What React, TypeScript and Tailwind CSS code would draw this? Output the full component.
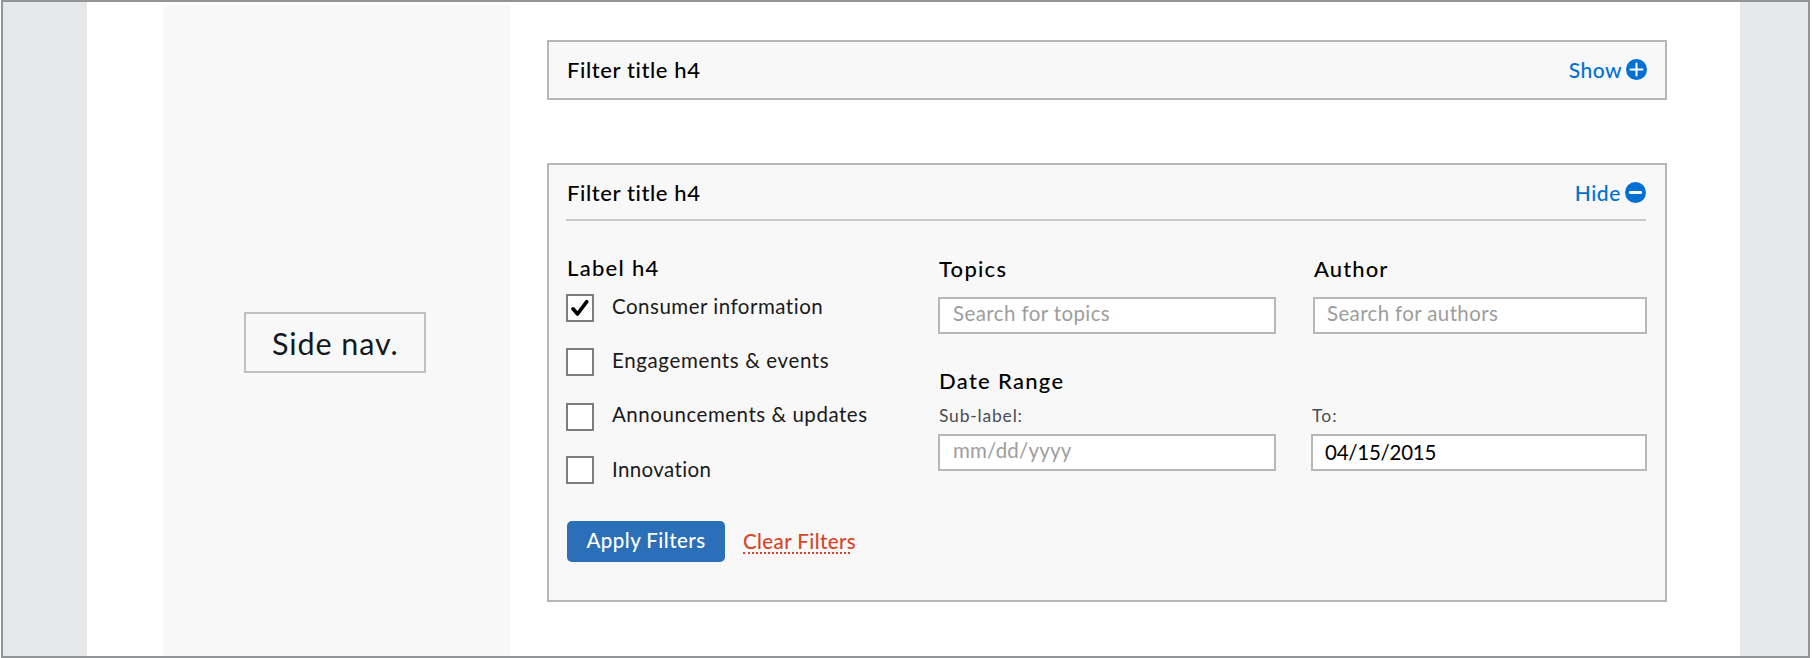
import type { ReactNode } from "react";

type Option = { label: string; checked?: boolean; row: string; text: string };

const options: Option[] = [
  { label: "Consumer information", checked: true, row: "mt-3", text: "leading-[25px] tracking-[0.5px]" },
  { label: "Engagements & events", row: "mt-[26px]", text: "leading-[25px] tracking-[0.63px]" },
  { label: "Announcements & updates", row: "mt-[27px]", text: "leading-[23px] tracking-[0.53px]" },
  { label: "Innovation", row: "mt-[25px]", text: "leading-[26px] tracking-[0.38px]" },
];

function Panel({ className, children }: { className: string; children: ReactNode }) {
  return (
    <section className={`w-[1120px] border-2 border-[#b7b7b7] bg-[#f8f8f8] pr-[19px] pl-[17px] ${className}`}>
      {children}
    </section>
  );
}

function PanelTitle() {
  return (
    <h4 className="pl-px text-[22px] leading-[56px] font-medium tracking-[0.6px] text-black">
      Filter title h4
    </h4>
  );
}

function ToggleIcon({ open }: { open: boolean }) {
  return (
    <svg viewBox="0 0 21 21" className="size-[21px]">
      <circle cx="10.5" cy="10.5" r="10.5" fill="#0071d2" />
      <path
        d={open ? "M5.3 10.5h10.4" : "M4.5 10.5h12M10.5 4.5v12"}
        stroke="#fff"
        strokeWidth={open ? 2.8 : 2}
        strokeLinecap="round"
      />
    </svg>
  );
}

function Checkbox({ checked }: { checked?: boolean }) {
  return (
    <span className="flex size-7 items-center justify-center border-2 border-[#7b7e7e] bg-white">
      {checked && (
        <svg viewBox="0 0 18 18" className="size-[18px]" fill="none">
          <path d="M2 9.8 6.5 15 15.8 2.6" stroke="#000" strokeWidth="3.6" strokeLinecap="round" strokeLinejoin="round" />
        </svg>
      )}
    </span>
  );
}

function FieldTitle({ className, children }: { className: string; children: ReactNode }) {
  return <h4 className={`text-[22px] leading-7 font-medium text-black ${className}`}>{children}</h4>;
}

const inputBase =
  "block rounded-none border-2 border-[#b7b7b7] bg-white text-[20.5px] outline-none placeholder:text-[#9d9d9d] placeholder:opacity-100";

export default function App() {
  return (
    <div className="h-[658px] w-[1812px] overflow-hidden bg-white pl-px font-['Lato','Liberation_Sans',sans-serif]">
      <div className="flex h-[658px] w-[1809px] border-2 border-[#929495] bg-white">
        <div className="w-[84px] bg-[#e6e7e8]" />

        <div className="flex flex-1">
          <aside className="mt-[3px] ml-[76px] flex w-[347px] justify-center bg-[#f8f8f8]">
            <div className="mt-[307px] ml-[-3px] h-[61px] w-[182px] border-2 border-[#c0c0c0] pl-[26px] text-[30.5px] leading-[58px] tracking-[0.9px] text-[#14181f]">
              Side nav.
            </div>
          </aside>

          <main className="ml-[37px]">
            <Panel className="mt-[38px] flex h-[60px] justify-between">
              <PanelTitle />
              <a className="-mr-px flex gap-1 text-[21px] leading-[56px] font-medium tracking-[0.45px] text-[#0071d2]">
                Show
                <span className="mt-[17px]">
                  <ToggleIcon open={false} />
                </span>
              </a>
            </Panel>

            <Panel className="mt-[63px] h-[439px]">
              <header className="flex h-14 justify-between border-b-2 border-[#cacaca]">
                <PanelTitle />
                <a className="flex gap-1 text-[21px] leading-[56px] font-medium tracking-[0.6px] text-[#0071d2]">
                  Hide
                  <span className="mt-[17px]">
                    <ToggleIcon open />
                  </span>
                </a>
              </header>

              <div className="-mr-0.5 flex">
                <div className="w-[372px] pt-[33px]">
                  <FieldTitle className="pl-px tracking-[1.3px]">Label h4</FieldTitle>
                  {options.map((o) => (
                    <label key={o.label} className={`flex h-7 gap-[18px] ${o.row}`}>
                      <Checkbox checked={o.checked} />
                      <span className={`text-[20.5px] text-[#1a1a1a] ${o.text}`}>{o.label}</span>
                    </label>
                  ))}
                  <div className="mt-[37px] ml-px flex text-[20.5px] font-medium">
                    <button className="h-[41px] w-[158px] rounded-[5px] bg-[#2b6fb8] pb-[3px] tracking-[0.45px] text-white">
                      <span className="block leading-9">Apply Filters</span>
                    </button>
                    <a className="ml-[18px] leading-10 tracking-[0.4px] text-[#d6452b]">
                      <span className="block h-[31px]">Clear Filters</span>
                      <span className="block w-[107px] border-b-2 border-dotted border-[#d6452b]" />
                    </a>
                  </div>
                </div>

                <div className="w-[373px] pt-[34px]">
                  <FieldTitle className="pl-px tracking-[1.25px]">Topics</FieldTitle>
                  <input
                    placeholder="Search for topics"
                    className={`mt-3.5 h-[37px] w-[338px] pb-[5px] pl-[13px] tracking-[0.4px] ${inputBase}`}
                  />
                  <FieldTitle className="mt-[33px] pl-px tracking-[1.3px]">Date Range</FieldTitle>
                  <div className="mt-2.5 pl-px text-[17.5px] leading-[22px] tracking-[0.8px] text-[#4a4c52]">Sub-label:</div>
                  <input
                    placeholder="mm/dd/yyyy"
                    className={`mt-[7px] h-[37px] w-[338px] pb-[6px] pl-[13px] tracking-[0.2px] ${inputBase}`}
                  />
                </div>

                <div className="w-[336px] shrink-0 pt-[34px]">
                  <FieldTitle className="pl-[3px] tracking-[1.1px]">Author</FieldTitle>
                  <input
                    placeholder="Search for authors"
                    className={`mt-3.5 ml-0.5 h-[37px] w-[334px] pb-[5px] pl-3 tracking-[0.36px] ${inputBase}`}
                  />
                  <div className="mt-[71px] pl-px text-[17.5px] leading-[22px] tracking-[1.1px] text-[#4a4c52]">To:</div>
                  <input
                    defaultValue="04/15/2015"
                    className={`mt-[7px] h-[37px] w-[336px] pb-0.5 pl-3 tracking-[-0.25px] text-black ${inputBase}`}
                  />
                </div>
              </div>
            </Panel>
          </main>
        </div>

        <div className="w-[68px] bg-[#e6e7e8]" />
      </div>
    </div>
  );
}
